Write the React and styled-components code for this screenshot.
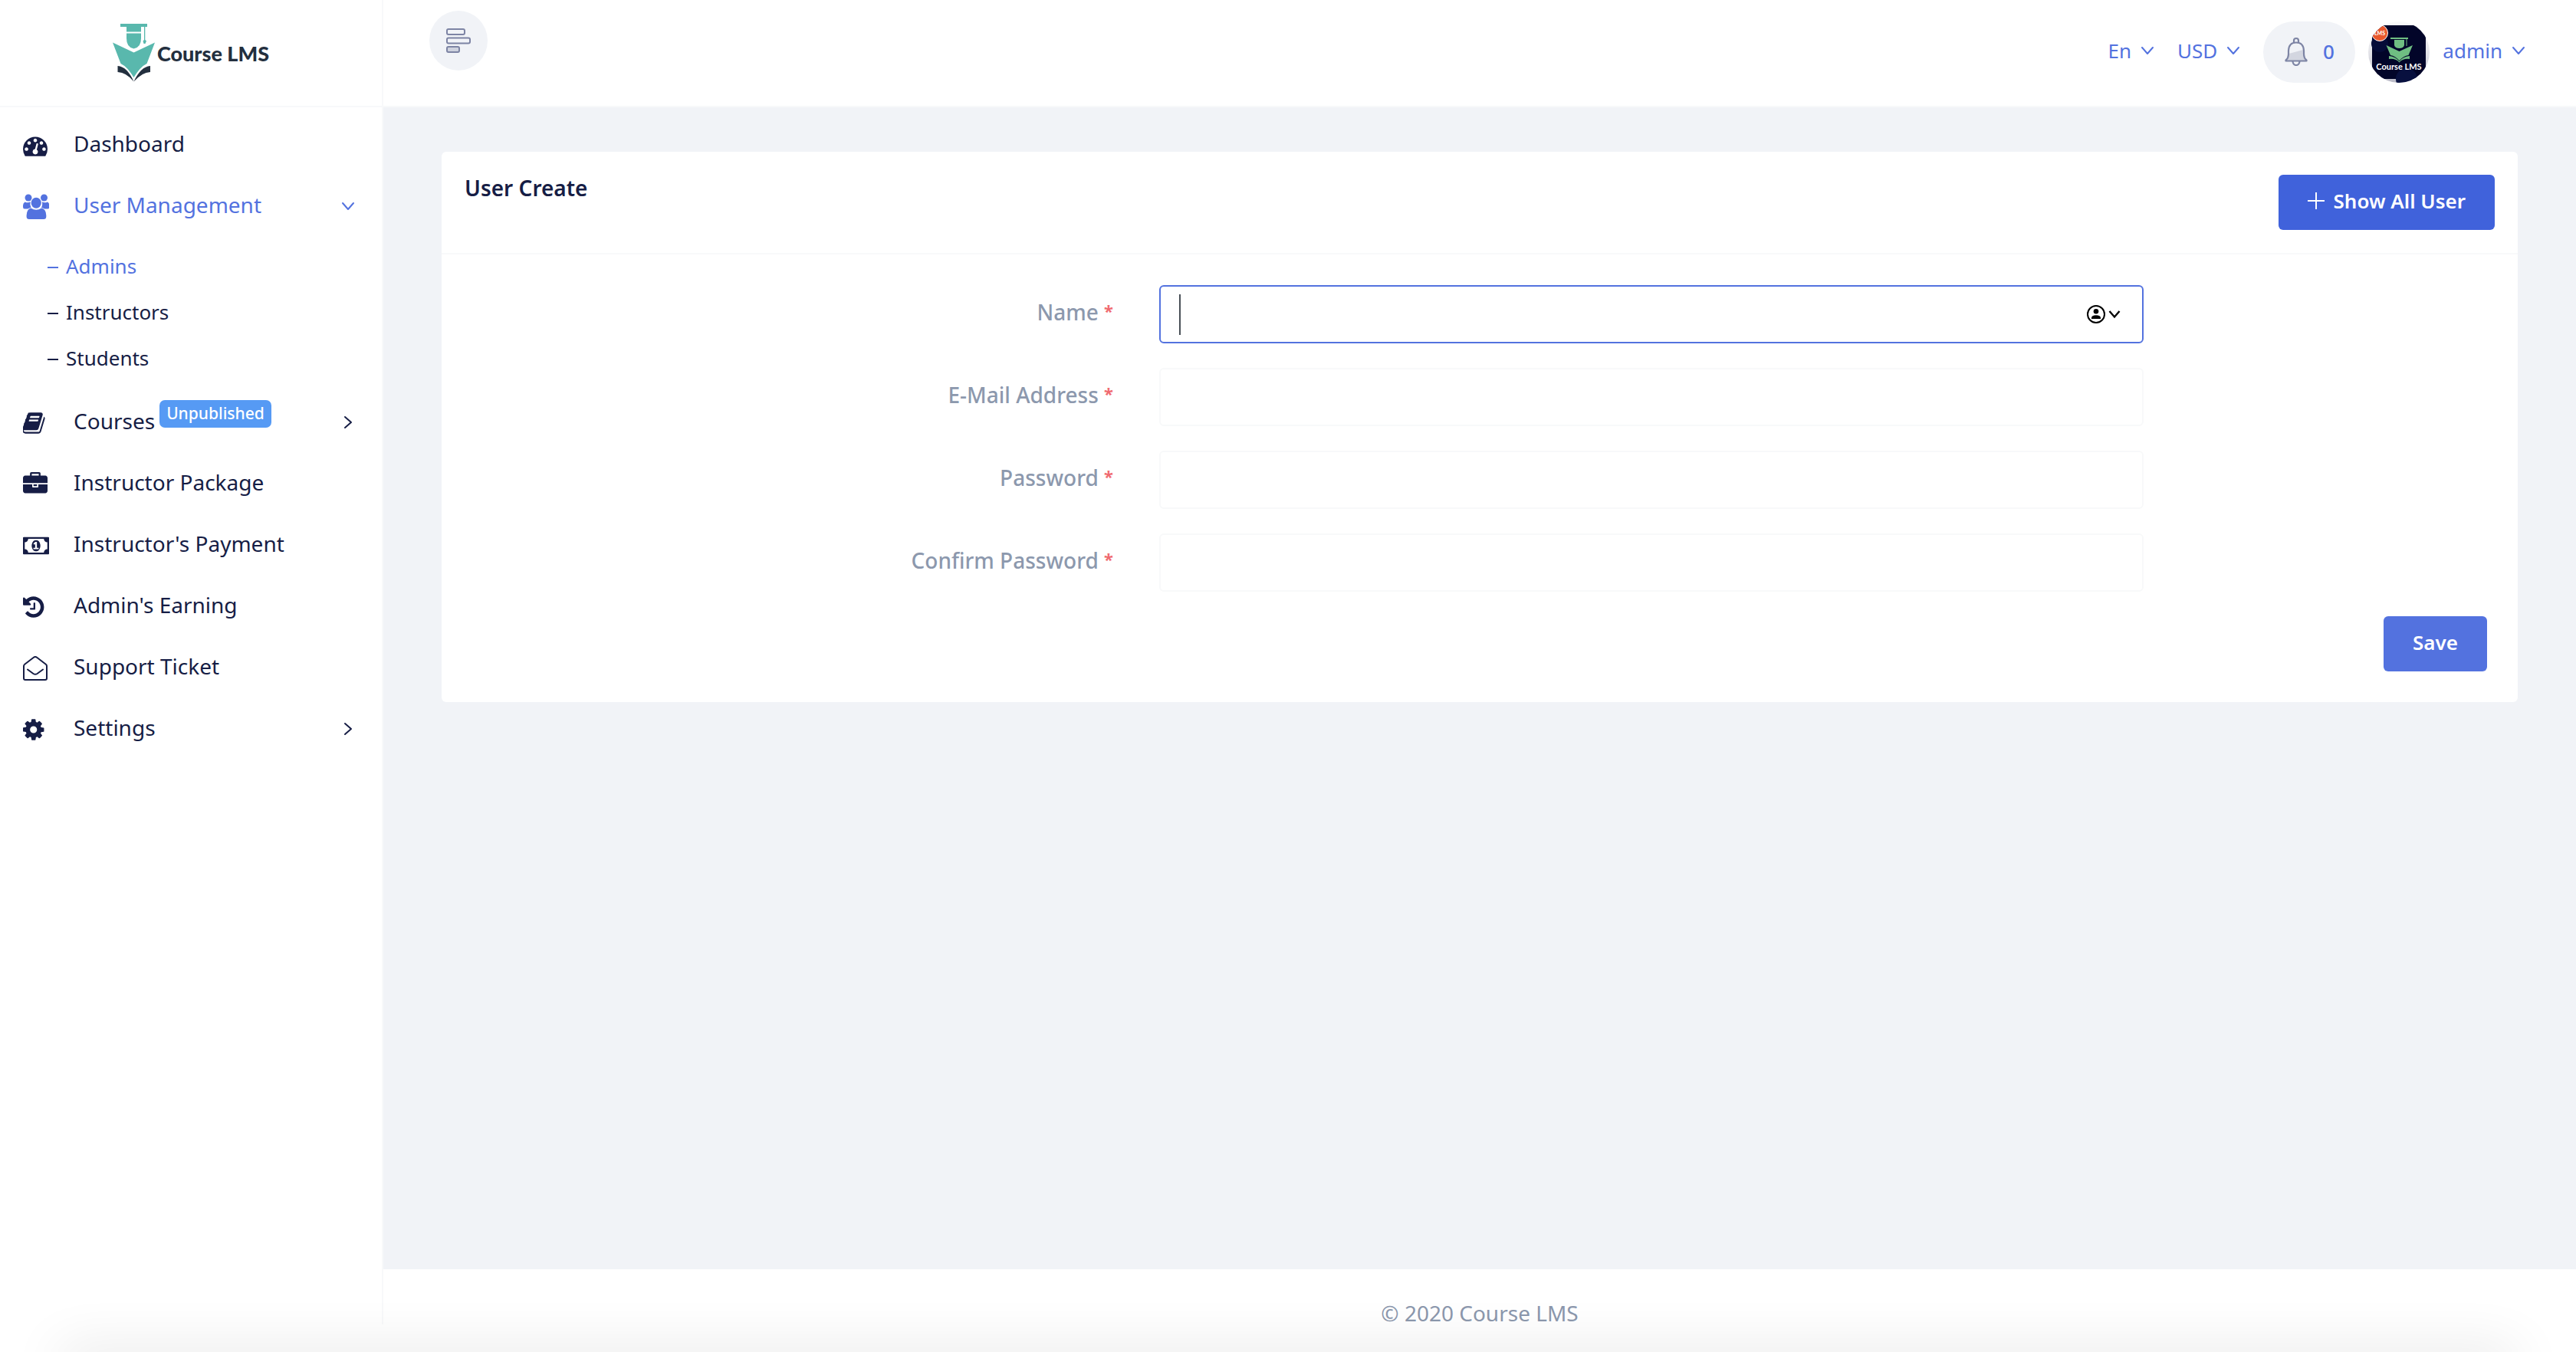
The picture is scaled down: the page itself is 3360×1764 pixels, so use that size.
import React, {useState} from 'react'
import styled, {createGlobalStyle} from 'styled-components'

const colors = {
    primary: '#5372df',
    primaryDark: '#4062db',
    navy: '#161d45',
    muted: '#8c98ad',
    page: '#f1f3f7',
    line: '#f8f9fa',
    danger: '#f06a6f',
    info: '#569af4',
    duo: '#7d84a4',
}

const GlobalStyle = createGlobalStyle`
  * {
    box-sizing: border-box;
  }

  body {
    margin: 0;
    background: #fff;
    color: ${colors.navy};
    font-family: "Noto Sans", "Open Sans", sans-serif;
    font-size: 28px;
  }

  button, input {
    font-family: inherit;
  }

  a {
    color: inherit;
    text-decoration: none;
  }

  svg {
    display: block;
    flex: none;
  }
`

const Layout = styled.div`
  display: flex;
  min-height: 100vh;
  overflow: hidden;
`

const Sidebar = styled.aside`
  flex: none;
  width: 500px;
  margin-bottom: 36px;
  border-right: 2px solid ${colors.line};
`

const Brand = styled.a`
  display: flex;
  align-items: center;
  justify-content: center;
  gap: 2px;
  height: 140px;
  border-bottom: 2px solid ${colors.line};
  color: #232f3e;
  font-family: Lato, "Noto Sans", sans-serif;
  font-size: 27px;
  font-weight: 900;
`

const Menu = styled.ul`
  margin: 0;
  padding: ${props => props.$sub ? '10px 0 12px' : '7px 0'};
  list-style: none;
`

const MenuLink = styled.a`
  display: flex;
  align-items: center;
  height: 80px;
  padding: 0 35px 0 30px;
  color: ${props => props.$active ? colors.primary : colors.navy};
`

const MenuIcon = styled.span`
  flex: none;
  width: 66px;
  margin-top: 6px;
`

const MenuArrow = styled.span`
  margin-left: auto;
  margin-top: 4px;
`

const SubLink = styled.a`
  display: flex;
  align-items: center;
  gap: 10px;
  height: 60px;
  padding-left: 62px;
  font-size: 26px;
  color: ${props => props.$active ? colors.primary : colors.navy};

  &::before {
    content: "";
    width: 14px;
    height: 2px;
    margin-top: 4px;
    background: currentColor;
  }
`

const Badge = styled.span`
  height: 36px;
  margin: 0 0 18px 6px;
  padding: 0 9px;
  border-radius: 7px;
  background: ${colors.info};
  color: #fff;
  font-size: 21px;
  font-weight: 500;
  line-height: 34px;
`

const Content = styled.div`
  display: flex;
  flex: 1;
  flex-direction: column;
  min-width: 0;
`

const Topbar = styled.header`
  display: flex;
  align-items: flex-start;
  justify-content: space-between;
  height: 140px;
  padding: 14px 66px 0 60px;
  border-bottom: 2px solid ${colors.line};
`

const RoundButton = styled.button`
  display: flex;
  align-items: center;
  justify-content: center;
  width: 76px;
  height: 78px;
  padding: 0;
  border: 0;
  border-radius: 50%;
  background: ${colors.page};
`

const Tools = styled.div`
  display: flex;
  align-items: center;
  gap: 30px;
  padding-top: 14px;
`

const Toggle = styled.button`
  display: flex;
  align-items: center;
  gap: 12px;
  padding: 0 0 4px;
  border: 0;
  background: none;
  color: ${colors.primary};
  font-size: 26px;
  line-height: 36px;
`

const Profile = styled.div`
  display: flex;
  align-items: center;
  gap: 17px;
`

const Notifications = styled.button`
  display: flex;
  align-items: center;
  justify-content: center;
  gap: 20px;
  width: 120px;
  height: 80px;
  padding: 0 0 2px;
  border: 0;
  border-radius: 40px;
  background: ${colors.page};
  color: ${colors.primary};
  font-size: 26px;
  font-weight: 500;
`

const Main = styled.main`
  flex: 1;
  padding: 58px 76px;
  background: ${colors.page};
`

const Card = styled.section`
  border-radius: 6px;
  background: #fff;
`

const CardHeader = styled.div`
  display: flex;
  align-items: flex-start;
  justify-content: space-between;
  padding: 30px;
  border-bottom: 2px solid ${colors.line};
`

const CardTitle = styled.h2`
  margin: 0;
  font-size: 28px;
  font-weight: 600;
  line-height: 34px;
`

const Button = styled.button`
  display: inline-flex;
  align-items: center;
  gap: 12px;
  height: 72px;
  padding: 0 38px 4px;
  border: 0;
  border-radius: 6px;
  background: ${props => props.$dark ? colors.primaryDark : colors.primary};
  color: #fff;
  font-size: 26px;
  font-weight: 600;
`

const Form = styled.form`
  display: grid;
  gap: 32px;
  padding: 40px;
`

const FormRow = styled.div`
  display: grid;
  grid-template-columns: repeat(12, 1fr);
  column-gap: 60px;
`

const Label = styled.label`
  grid-column: span 4;
  color: ${colors.muted};
  font-weight: 500;
  line-height: 70px;
  text-align: right;
`

const Required = styled.span`
  color: ${colors.danger};
  font-size: 22px;
  font-weight: 700;
  line-height: 1;
  vertical-align: 4px;
`

const Field = styled.div`
  grid-column: span 6;
  display: flex;
  align-items: center;
  height: 76px;
  padding: 0 28px 0 24px;
  border: 2px solid ${props => props.$focused ? colors.primary : colors.line};
  border-radius: 6px;
`

const Caret = styled.span`
  width: 2px;
  height: 53px;
  background: #495057;
`

const Input = styled.input`
  flex: 1;
  min-width: 0;
  height: 100%;
  padding: 0;
  border: 0;
  outline: 0;
  background: transparent;
  color: #495057;
  font-size: 28px;
`

const AutofillButton = styled.button`
  display: flex;
  align-items: center;
  gap: 4px;
  padding: 0;
  border: 0;
  background: none;
  color: #000;
`

const Actions = styled.div`
  display: flex;
  justify-content: flex-end;
`

const Footer = styled.footer`
  height: 108px;
  padding-top: 36px;
  color: ${colors.muted};
  line-height: 42px;
  text-align: center;
`

// soft shade rising from the lower edge of the window
const EdgeShade = styled.div`
  position: fixed;
  right: 90px;
  bottom: -20px;
  left: 90px;
  height: 10px;
  box-shadow: 0 0 70px 12px rgba(0, 0, 0, 0.12);
  pointer-events: none;
`

const glyphs = {
    dashboard: 'M384 1152q0-53-37.500-90.500t-90.500-37.500-90.500 37.500-37.500 90.500 37.500 90.500 90.500 37.500 90.500-37.500 37.500-90.500zm192-448q0-53-37.500-90.500t-90.500-37.500-90.500 37.500-37.500 90.500 37.500 90.500 90.500 37.500 90.500-37.500 37.500-90.500zm428 481l101-382q6-26-7.500-48.500t-38.500-29.500-48 6.500-30 39.500l-101 382q-60 5-107 43.500t-63 98.500q-20 77 20 146t117 89 146-20 89-117q16-60-6-117t-72-91zm660-33q0-53-37.500-90.500t-90.500-37.500-90.500 37.500-37.500 90.500 37.500 90.500 90.500 37.500 90.500-37.500 37.500-90.500zm-640-640q0-53-37.500-90.500t-90.500-37.500-90.500 37.500-37.500 90.500 37.500 90.500 90.500 37.500 90.500-37.500 37.500-90.500zm448 192q0-53-37.500-90.500t-90.500-37.500-90.500 37.500-37.500 90.500 37.500 90.500 90.500 37.500 90.500-37.500 37.500-90.500zm320 448q0 261-141 483-19 29-54 29h-1402q-35 0-54-29-141-221-141-483 0-182 71-348t191-286 286-191 348-71 348 71 286 191 191 286 71 348z',
    book: 'M1639 478q40 57 18 129l-275 906q-19 64-76.500 107.500t-122.500 43.500h-923q-77 0-148.500-53.500t-99.500-131.500q-24-67-2-127 0-4 3-27t4-37q1-8-3-21.500t-3-19.500q2-11 8-21t16.500-23.500 16.500-23.500q23-38 45-91.500t30-91.500q3-10 .5-30t-.5-28q3-11 17-28t17-23q21-36 42-92t25-90q1-9-2.500-32t.5-28q4-13 22-30.500t22-22.500q19-26 42.500-84.500t27.500-96.500q1-8-3-25.500t-2-26.500q2-8 9-18t18-23 17-21q8-12 16.500-30.500t15-35 16-36 19.500-32 26.500-23.500 36-11.500 47.500 5.500l-1 3q38-9 51-9h761q74 0 114 56t18 130l-274 906q-36 119-71.500 153.500t-128.500 34.500h-869q-27 0-38 15-11 16-1 43 24 70 144 70h923q29 0 56-15.500t35-41.500l300-987q7-22 5-57 38 15 59 43zm-1064 2q-4 13 2 22.500t20 9.500h608q13 0 25.500-9.500t16.500-22.500l21-64q4-13-2-22.500t-20-9.500h-608q-13 0-25.500 9.500t-16.500 22.500zm-83 256q-4 13 2 22.500t20 9.500h608q13 0 25.500-9.500t16.500-22.500l21-64q4-13-2-22.500t-20-9.500h-608q-13 0-25.500 9.500t-16.500 22.500z',
    briefcase: 'M640 256h512v-128h-512v128zm1152 640v480q0 66-47 113t-113 47h-1472q-66 0-113-47t-47-113v-480h672v160q0 26 19 45t45 19h320q26 0 45-19t19-45v-160h672zm-768 0v128h-256v-128h256zm768-480v384h-1792v-384q0-66 47-113t113-47h352v-160q0-40 28-68t68-28h576q40 0 68 28t28 68v160h352q66 0 113 47t47 113z',
    money: 'M768 1152h384v-96h-128v-448h-114l-148 137 77 80q42-37 55-57h2v288h-128v96zm512-256q0 70-21 142t-59.500 134-101.500 101-138 39-138-39-101.500-101-59.500-134-21-142 21-142 59.500-134 101.500-101 138-39 138 39 101.500 101 59.500 134 21 142zm512 256v-512q-106 0-181-75t-75-181h-1152q0 106-75 181t-181 75v512q106 0 181 75t75 181h1152q0-106 75-181t181-75zm128-832v1152q0 26-19 45t-45 19h-1792q-26 0-45-19t-19-45v-1152q0-26 19-45t45-19h1792q26 0 45 19t19 45z',
    history: 'M1664 896q0 156-61 298t-164 245-245 164-298 61q-172 0-327-72.500t-264-204.500q-7-10-6.500-22.500t8.500-20.500l137-138q10-9 25-9 16 2 23 12 73 95 179 147t225 52q104 0 198.500-40.500t163.500-109.500 109.500-163.500 40.500-198.500-40.500-198.500-109.500-163.500-163.500-109.500-198.500-40.500q-98 0-188 35.500t-160 101.500l137 138q31 30 14 69-17 40-59 40h-448q-26 0-45-19t-19-45v-448q0-42 40-59 39-17 69 14l130 129q107-101 244.500-156.500t284.500-55.500q156 0 298 61t245 164 164 245 61 298zm-640-288v448q0 14-9 23t-23 9h-320q-14 0-23-9t-9-23v-64q0-14 9-23t23-9h224v-352q0-14 9-23t23-9h64q14 0 23 9t9 23z',
    cog: 'M1152 896q0-106-75-181t-181-75-181 75-75 181 75 181 181 75 181-75 75-181zm512-109v222q0 12-8 23t-20 13l-185 28q-19 54-39 91 35 50 107 138 10 12 10 25t-9 23q-27 37-99 108t-94 71q-12 0-26-9l-138-108q-44 23-91 38-16 136-29 186-7 28-36 28h-222q-14 0-24.500-8.500t-11.500-21.500l-28-184q-49-16-90-37l-141 107q-10 9-25 9-14 0-25-11-126-114-165-168-7-10-7-23 0-12 8-23 15-21 51-66.500t54-70.500q-27-50-41-99l-183-27q-13-2-21-12.500t-8-23.500v-222q0-12 8-23t19-13l186-28q14-46 39-92-40-57-107-138-10-12-10-24 0-10 9-23 26-36 98.500-107.500t94.500-71.500q13 0 26 10l138 107q44-23 91-38 16-136 29-186 7-28 36-28h222q14 0 24.500 8.500t11.500 21.500l28 184q49 16 90 37l142-107q9-9 24-9 13 0 25 10 129 119 165 170 7 8 7 22 0 12-8 23-15 21-51 66.500t-54 70.500q26 50 41 98l183 28q13 2 21 12.500t8 23.500z',
}

function Glyph({name, left = 0, wide}) {
    return (<svg width={wide ? 34 : 32} height="32" viewBox={`${left} 0 ${wide ? 1920 : 1792} 1792`} fill="currentColor">
        <path d={glyphs[name]}/>
    </svg>)
}

function UsersIcon() {
    return (<svg width="34" height="34" viewBox="0 0 34 34" fill="currentColor">
        <circle cx="7" cy="5" r="4.500"/>
        <circle cx="27.500" cy="5" r="4.500"/>
        <ellipse cx="17.200" cy="11.800" rx="6.600" ry="7"/>
        <path d="M2.500 10.500Q6.500 12.300 9.600 10.300Q8.600 14.800 10.500 18Q8 18 6.300 19.500H2Q0 19.500 0 17V15Q0 12 2.500 10.500Z"/>
        <path d="M31.900 10.500Q28 12.300 24.800 10.300Q25.900 14.800 23.900 18Q26.400 18 28.100 19.500H32.400Q34.400 19.500 34.400 17V15Q34.400 12 31.900 10.500Z"/>
        <path d="M10.300 18.500Q17.200 23 24.100 18.500Q30 19.500 30.300 28V29.500Q30.300 33 27 33H8Q4.600 33 4.600 29.500V28Q5 19.500 10.300 18.500Z"/>
    </svg>)
}

function EnvelopeIcon() {
    return (<svg width="32" height="32" viewBox="0 0 32 32" fill="none" stroke="currentColor" strokeWidth="2"
                 strokeLinecap="round" strokeLinejoin="round">
        <path d="M1 13Q1 11.600 2.200 10.700L13.600 2Q16 .2 18.400 2L29.800 10.700Q31 11.600 31 13V29Q31 31 29 31H3Q1 31 1 29Z"/>
        <path d="M6 17.500L13.500 23Q16 24.600 18.500 23L26 17.500"/>
    </svg>)
}

function Chevron({right}) {
    return (<svg width="18" height="18" viewBox="0 0 18 18" fill="none" stroke="currentColor" strokeWidth="2"
                 strokeLinecap="round" strokeLinejoin="round">
        <path d={right ? 'M5 2L13 9L5 16' : 'M2 5L9 13L16 5'}/>
    </svg>)
}

function PlusIcon() {
    return (<svg width="22" height="22" viewBox="0 0 22 22" stroke="currentColor" strokeWidth="2">
        <path d="M11 0V22M0 11H22"/>
    </svg>)
}

function BarsIcon() {
    return (<svg width="34" height="32" viewBox="0 0 34 32" fill="none" stroke={colors.duo} strokeWidth="2">
        <rect x="2" y="1" width="23" height="7" rx="2"/>
        <rect x="2" y="12.500" width="30" height="7" rx="2"/>
        <rect x="2" y="24" width="16" height="7" rx="2" fill="#ced2de"/>
    </svg>)
}

function BellIcon() {
    return (<svg width="30" height="38" viewBox="0 0 30 38" fill="none" stroke={colors.duo} strokeWidth="2.200"
                 strokeLinejoin="round">
        <path d="M5.500 22L24 17Q24.600 26 27 31H3Q5.500 27 5.500 22Z" fill="#d3d6e0" stroke="none"/>
        <path d="M12 7.500V5Q12 2 15 2T18 5V7.500"/>
        <path d="M1.500 31.500V30.300Q5 28 5 22V18Q5.500 7.500 15 7.500T25 18V22Q25 28 28.500 30.300V31.500Z"/>
        <path d="M10.500 32Q11 37 15 37T19.500 32"/>
    </svg>)
}

function AutofillIcon() {
    return (<>
        <svg width="24" height="24" viewBox="0 0 24 24">
            <circle cx="12" cy="12" r="11" fill="none" stroke="currentColor" strokeWidth="2"/>
            <circle cx="12" cy="8.300" r="3.300" fill="currentColor"/>
            <path d="M6 18V17Q6 13.300 12 13.300T18 17V18Z" fill="currentColor"/>
        </svg>
        <svg width="16" height="12" viewBox="0 0 16 12" fill="none" stroke="currentColor" strokeWidth="2.400">
            <path d="M1.500 2L8 9.500L14.500 2"/>
        </svg>
    </>)
}

function LogoMark() {
    return (<svg width="56" height="78" viewBox="0 0 56 78">
        <g fill="#59b8ad">
            <path d="M10 1H45V5H10Z"/>
            <path d="M18 5H37V11.500H18Z"/>
            <path d="M18 13.500H37V20Q37 32 27.500 33.500Q18 32 18 20Z"/>
            <path d="M41 5H42.300V22L44 23.500L42.500 27H40.500L39.500 23.500L41 22Z"/>
            <path d="M0 25.500L27.500 38.500L55 25.500L44.500 53Q36 57 27.500 71Q19 57 10.500 53Z"/>
        </g>
        <path d="M6.500 56Q19 57 27.500 76.500Q18 64.500 6.500 64Z" fill="#232f3e"/>
        <path d="M49 56Q36.500 57 27.500 76.500Q38 64.500 49 64Z" fill="#232f3e"/>
    </svg>)
}

function Avatar() {
    return (<svg width="80" height="80" viewBox="0 0 80 80" role="img" aria-label="admin">
        <defs>
            <linearGradient id="ring" x1="0" y1="0" x2="0" y2="1">
                <stop offset="0" stopColor="#fafafb"/>
                <stop offset="0.500" stopColor="#e4e4e9"/>
                <stop offset="1" stopColor="#b9b9c6"/>
            </linearGradient>
            <clipPath id="round"><circle cx="40" cy="40" r="40"/></clipPath>
        </defs>
        <g clipPath="url(#round)">
            <rect width="80" height="80" fill="url(#ring)"/>
            <rect x="5" y="5" width="70" height="70" fill="#020529"/>
            <circle cx="15" cy="29" r="11" fill="#050c38"/>
            <circle cx="50" cy="75" r="14" fill="#08103f"/>
            <circle cx="15" cy="15" r="10.500" fill="#e9582c" stroke="#fff" strokeWidth="1"/>
            <g fill="#6fbe82">
                <path d="M29 21H52V23H29ZM34 24H47V31Q46 35 40.500 35Q35 35 34 31ZM49.500 23H50.500V32H49.500Z"/>
                <path d="M23.500 31L40.500 39L58 31L52.500 44Q46 45 40.500 51Q35 45 29 44Z"/>
                <path d="M27 45Q36 46 40.500 52Q45 46 54 45V49Q45 48 40.500 53.500Q36 48 27 49Z"/>
            </g>
        </g>
        <g fill="#fff" fontWeight="700" textAnchor="middle" fontFamily="Lato, sans-serif">
            <text x="15" y="18" fontSize="7">LMS</text>
            <text x="40" y="63" fontSize="11">Course LMS</text>
        </g>
    </svg>)
}

const menu = [
    {title: 'Dashboard', icon: <Glyph name="dashboard"/>},
    {title: 'User Management', icon: <UsersIcon/>, active: true, items: ['Admins', 'Instructors', 'Students']},
    {title: 'Courses', icon: <Glyph name="book" left={64}/>, badge: 'Unpublished', more: true},
    {title: 'Instructor Package', icon: <Glyph name="briefcase"/>},
    {title: "Instructor's Payment", icon: <Glyph name="money" wide/>},
    {title: "Admin's Earning", icon: <Glyph name="history" left={128}/>},
    {title: 'Support Ticket', icon: <EnvelopeIcon/>},
    {title: 'Settings', icon: <Glyph name="cog" left={128}/>, more: true},
]

const fields = [
    {id: 'name', label: 'Name', type: 'text'},
    {id: 'email', label: 'E-Mail Address', type: 'email'},
    {id: 'password', label: 'Password', type: 'password'},
    {id: 'password_confirmation', label: 'Confirm Password', type: 'password'},
]

function SidebarMenu() {
    return (<nav>
        <Menu>
            {menu.map(entry => (<li key={entry.title}>
                <MenuLink href="#" $active={entry.active}>
                    <MenuIcon>{entry.icon}</MenuIcon>
                    {entry.title}
                    {entry.badge && <Badge>{entry.badge}</Badge>}
                    {(entry.items || entry.more) && <MenuArrow><Chevron right={entry.more}/></MenuArrow>}
                </MenuLink>
                {entry.items && <Menu $sub>
                    {entry.items.map((item, i) => (
                        <li key={item}><SubLink href="#" $active={i === 0}>{item}</SubLink></li>))}
                </Menu>}
            </li>))}
        </Menu>
    </nav>)
}

function UserForm() {
    const [values, setValues] = useState({})
    const [focused, setFocused] = useState('name')
    const change = (id, value) => setValues({...values, [id]: value})

    return (<Form onSubmit={e => e.preventDefault()}>
        {fields.map(field => (<FormRow key={field.id}>
            <Label htmlFor={field.id}>{field.label} <Required>*</Required></Label>
            <Field $focused={focused === field.id}>
                {focused === field.id && !values[field.id] && <Caret/>}
                <Input id={field.id} type={field.type} value={values[field.id] || ''}
                       onFocus={() => setFocused(field.id)}
                       onChange={e => change(field.id, e.target.value)}/>
                {field.id === 'name' &&
                    <AutofillButton type="button" aria-label="Autofill contact"><AutofillIcon/></AutofillButton>}
            </Field>
        </FormRow>))}
        <Actions><Button type="submit">Save</Button></Actions>
    </Form>)
}

function App() {
    return (<>
        <GlobalStyle/>
        <Layout>
            <Sidebar>
                <Brand href="#"><LogoMark/>Course LMS</Brand>
                <SidebarMenu/>
            </Sidebar>
            <Content>
                <Topbar>
                    <RoundButton aria-label="Toggle menu"><BarsIcon/></RoundButton>
                    <Tools>
                        <Toggle aria-haspopup="menu">En<Chevron/></Toggle>
                        <Toggle aria-haspopup="menu">USD<Chevron/></Toggle>
                        <Profile>
                            <Notifications aria-label="Notifications"><BellIcon/>0</Notifications>
                            <Avatar/>
                            <Toggle aria-haspopup="menu">admin<Chevron/></Toggle>
                        </Profile>
                    </Tools>
                </Topbar>
                <Main>
                    <Card>
                        <CardHeader>
                            <CardTitle>User Create</CardTitle>
                            <Button type="button" $dark><PlusIcon/>Show All User</Button>
                        </CardHeader>
                        <UserForm/>
                    </Card>
                </Main>
                <Footer>© 2020 Course LMS</Footer>
            </Content>
        </Layout>
        <EdgeShade/>
    </>)
}

export default App
